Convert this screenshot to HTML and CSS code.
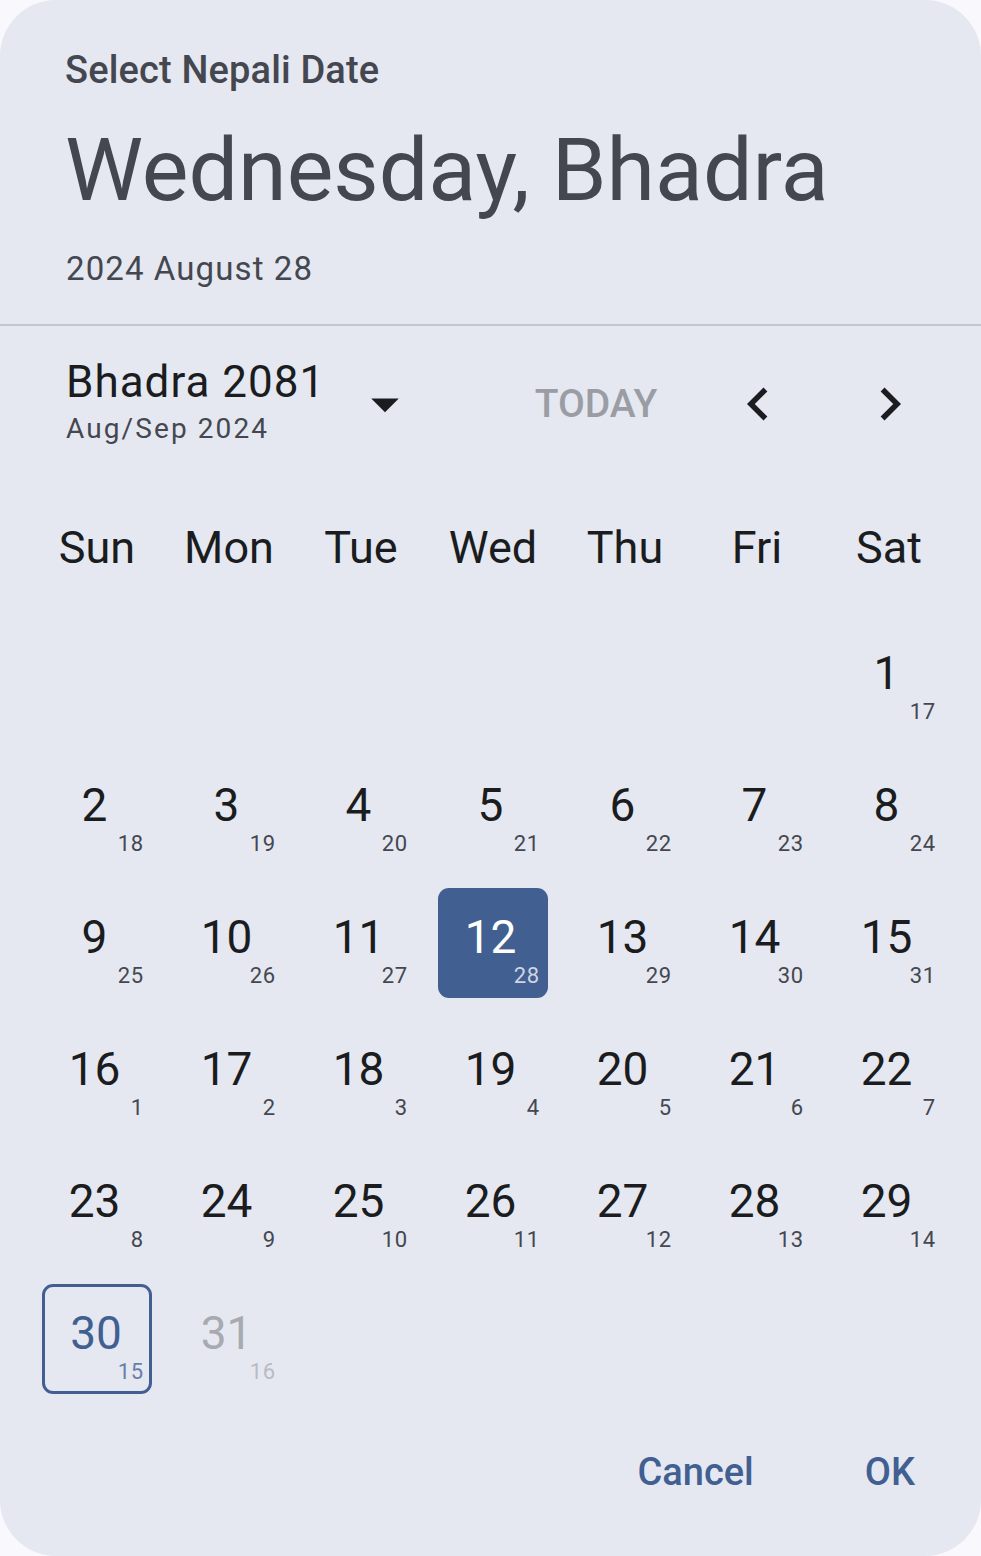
FILE: index.html
```html
<!DOCTYPE html>
<html lang="en">
<head>
<meta charset="utf-8">
<title>Select Nepali Date</title>
<link rel="stylesheet" href="styles.css">
</head>
<body>
<div class="dialog">
  <header class="head">
    <div class="title">Select Nepali Date</div>
    <div class="headline">Wednesday, Bhadra</div>
    <div class="ad-date">2024 August 28</div>
  </header>
  <div class="divider"></div>
  <div class="month-row">
    <div class="month-label">
      <div class="month-name">Bhadra 2081</div>
      <div class="month-ad">Aug/Sep 2024</div>
    </div>
    <div class="icon-btn">
      <svg viewBox="0 0 24 24" width="66" height="66"><path d="M7 10l5 5 5-5z" fill="#1a1c20"/></svg>
    </div>
    <div class="today">TODAY</div>
    <div class="icon-btn prev">
      <svg viewBox="0 0 24 24" width="66" height="66"><path d="M15.41 7.41L14 6l-6 6 6 6 1.41-1.41L10.83 12z" fill="#1a1c20"/></svg>
    </div>
    <div class="icon-btn next">
      <svg viewBox="0 0 24 24" width="66" height="66"><path d="M10 6L8.59 7.41 13.17 12l-4.58 4.59L10 18l6-6z" fill="#1a1c20"/></svg>
    </div>
  </div>
  <div class="grid">
    <div class="wd">Sun</div><div class="wd">Mon</div><div class="wd">Tue</div><div class="wd">Wed</div><div class="wd">Thu</div><div class="wd">Fri</div><div class="wd">Sat</div>

    <div class="cell"></div><div class="cell"></div><div class="cell"></div><div class="cell"></div><div class="cell"></div><div class="cell"></div>
    <div class="cell"><div class="day"><span class="num">1</span><span class="sub">17</span></div></div>

    <div class="cell"><div class="day"><span class="num">2</span><span class="sub">18</span></div></div>
    <div class="cell"><div class="day"><span class="num">3</span><span class="sub">19</span></div></div>
    <div class="cell"><div class="day"><span class="num">4</span><span class="sub">20</span></div></div>
    <div class="cell"><div class="day"><span class="num">5</span><span class="sub">21</span></div></div>
    <div class="cell"><div class="day"><span class="num">6</span><span class="sub">22</span></div></div>
    <div class="cell"><div class="day"><span class="num">7</span><span class="sub">23</span></div></div>
    <div class="cell"><div class="day"><span class="num">8</span><span class="sub">24</span></div></div>

    <div class="cell"><div class="day"><span class="num">9</span><span class="sub">25</span></div></div>
    <div class="cell"><div class="day"><span class="num">10</span><span class="sub">26</span></div></div>
    <div class="cell"><div class="day"><span class="num">11</span><span class="sub">27</span></div></div>
    <div class="cell"><div class="day selected"><span class="num">12</span><span class="sub">28</span></div></div>
    <div class="cell"><div class="day"><span class="num">13</span><span class="sub">29</span></div></div>
    <div class="cell"><div class="day"><span class="num">14</span><span class="sub">30</span></div></div>
    <div class="cell"><div class="day"><span class="num">15</span><span class="sub">31</span></div></div>

    <div class="cell"><div class="day"><span class="num">16</span><span class="sub">1</span></div></div>
    <div class="cell"><div class="day"><span class="num">17</span><span class="sub">2</span></div></div>
    <div class="cell"><div class="day"><span class="num">18</span><span class="sub">3</span></div></div>
    <div class="cell"><div class="day"><span class="num">19</span><span class="sub">4</span></div></div>
    <div class="cell"><div class="day"><span class="num">20</span><span class="sub">5</span></div></div>
    <div class="cell"><div class="day"><span class="num">21</span><span class="sub">6</span></div></div>
    <div class="cell"><div class="day"><span class="num">22</span><span class="sub">7</span></div></div>

    <div class="cell"><div class="day"><span class="num">23</span><span class="sub">8</span></div></div>
    <div class="cell"><div class="day"><span class="num">24</span><span class="sub">9</span></div></div>
    <div class="cell"><div class="day"><span class="num">25</span><span class="sub">10</span></div></div>
    <div class="cell"><div class="day"><span class="num">26</span><span class="sub">11</span></div></div>
    <div class="cell"><div class="day"><span class="num">27</span><span class="sub">12</span></div></div>
    <div class="cell"><div class="day"><span class="num">28</span><span class="sub">13</span></div></div>
    <div class="cell"><div class="day"><span class="num">29</span><span class="sub">14</span></div></div>

    <div class="cell"><div class="day today-cell"><span class="num">30</span><span class="sub">15</span></div></div>
    <div class="cell"><div class="day disabled"><span class="num">31</span><span class="sub">16</span></div></div>
  </div>
  <div class="actions">
    <div class="btn">Cancel</div>
    <div class="btn">OK</div>
  </div>
</div>
</body>
</html>
```
FILE: styles.css
```css
* { box-sizing: border-box; }
html, body {
  margin: 0;
  padding: 0;
  background: #f8f8fd;
}
body {
  font-family: Roboto, "Liberation Sans", sans-serif;
  width: 981px;
  height: 1556px;
  overflow: hidden;
}
.dialog {
  width: 981px;
  height: 1556px;
  background: #e5e8f1;
  border-radius: 56px;
  overflow: hidden;
}
.head {
  padding: 48px 0 35px 66px;
  color: #44474f;
}
.title {
  font-size: 38px;
  font-weight: 500;
  line-height: 44px;
  margin-left: -1px;
  letter-spacing: 0.15px;
}
.headline {
  margin-top: 26px;
  font-size: 88px;
  line-height: 104px;
  font-weight: 400;
  margin-left: -1px;
}
.ad-date {
  margin-top: 27px;
  font-size: 33px;
  line-height: 40px;
  letter-spacing: 1.1px;
}
.divider {
  height: 2px;
  background: #c4c6cd;
}
.month-row {
  height: 155px;
  display: flex;
  align-items: center;
  padding-left: 66px;
}
.month-label {
  width: 286px;
}
.month-name {
  font-size: 44px;
  line-height: 48px;
  color: #1a1c20;
  letter-spacing: 1px;
  margin-top: -3px;
}
.month-ad {
  margin-top: 6px;
  font-size: 28px;
  line-height: 34px;
  color: #44474f;
  letter-spacing: 2.1px;
}
.icon-btn {
  width: 66px;
  height: 66px;
  display: flex;
}
.today {
  width: 192px;
  margin-left: 82px;
  text-align: center;
  font-size: 39px;
  font-weight: 500;
  color: #9b9da4;
}
.prev { margin-left: 33px; }
.next { margin-left: 66px; }
.grid {
  display: grid;
  grid-template-columns: repeat(7, 132px);
  grid-auto-rows: 132px;
  padding-left: 31px;
}
.wd {
  display: flex;
  align-items: center;
  justify-content: center;
  font-size: 45px;
  color: #1a1c20;
}
.cell {
  display: flex;
  align-items: center;
  justify-content: center;
}
.day {
  width: 110px;
  height: 110px;
  border-radius: 11px;
  padding-top: 26px;
  display: flex;
  flex-direction: column;
  color: #1a1c20;
}
.num {
  display: block;
  font-size: 46px;
  line-height: 46px;
  text-align: center;
  padding-right: 5px;
}
.sub {
  display: block;
  margin-top: 5px;
  font-size: 22px;
  line-height: 22px;
  text-align: right;
  padding-right: 8px;
  color: #44474f;
  letter-spacing: 0.8px;
}
.selected {
  background: #415f91;
  color: #ffffff;
}
.selected .sub { color: #cfd5e3; }
.today-cell {
  border: 3px solid #415f91;
  padding-top: 23px;
  color: #415f91;
}
.today-cell .sub { color: #6a7ea6; padding-right: 5px; }
.today-cell .num { padding-right: 2px; }
.disabled { color: #a8aab0; }
.disabled .sub { color: #b9bbc2; }
.actions {
  display: flex;
  justify-content: flex-end;
  padding: 12px 33px 0 0;
}
.btn {
  height: 110px;
  padding: 0 33px;
  display: flex;
  align-items: center;
  font-size: 38px;
  font-weight: 500;
  color: #415f91;
}
.btn + .btn { margin-left: 45px; }
```
